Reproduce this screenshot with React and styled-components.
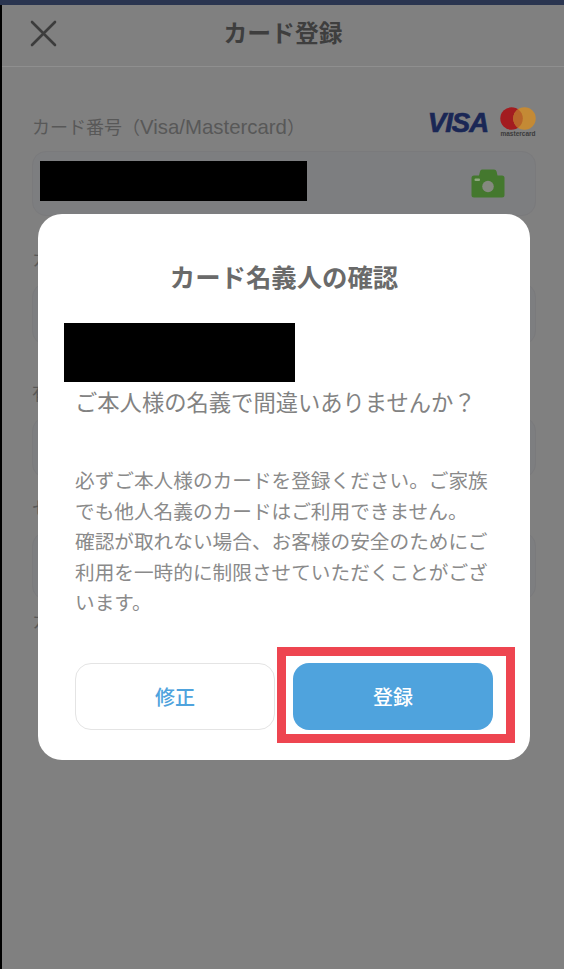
import React from "react";
import styled, { createGlobalStyle } from "styled-components";

const Global = createGlobalStyle`
  html, body { margin: 0; padding: 0; background: #808080; }
  * { box-sizing: border-box; }
  body { font-family: "Noto Sans CJK JP", "Noto Sans", sans-serif; }
`;

const Page = styled.div`
  position: relative;
  width: 564px;
  height: 969px;
  overflow: hidden;
  display: flex;
  flex-direction: column;
  background: #808080;
`;

const StatusStrip = styled.div`
  height: 5px;
  flex: none;
  background: #2a3550;
`;

const Screen = styled.div`
  flex: 1;
  border-left: 2px solid #000;
  display: flex;
  flex-direction: column;
`;

const Header = styled.header`
  height: 62px;
  flex: none;
  display: flex;
  align-items: center;
  justify-content: center;
  position: relative;
  border-bottom: 1px solid #8f8f8f;
`;

const CloseButton = styled.div`
  position: absolute;
  left: 27px;
  top: 14px;
  width: 28px;
  height: 28px;
  color: #3c3c3c;
`;

const HeaderTitle = styled.h1`
  margin: 0 0 8px 0;
  font-size: 23.8px;
  font-weight: 700;
  line-height: 32px;
  color: #3e3e3e;
`;

const Form = styled.div`
  padding: 47px 28px 0 30px;
  display: flex;
  flex-direction: column;
`;

const Field = styled.div`
  height: ${(p) => p.$pitch}px;
  flex: none;
`;

const LabelRow = styled.div`
  height: 24px;
  margin-bottom: 13px;
  display: flex;
  align-items: center;
  justify-content: space-between;
`;

const Label = styled.label`
  font-size: 18px;
  line-height: 24px;
  color: #585858;
`;

const LatinPart = styled.span`
  font-family: "Liberation Sans", sans-serif;
  font-size: 20.4px;
`;

const Brands = styled.div`
  display: flex;
  align-items: flex-start;
  gap: 12px;
  margin-top: -9px;
`;

const Visa = styled.span`
  font-family: "Liberation Sans", sans-serif;
  font-style: italic;
  font-weight: 700;
  font-size: 27.5px;
  line-height: 30px;
  letter-spacing: -1px;
  margin-top: 2px;
  color: #1a2755;
  -webkit-text-stroke: 0.7px #1a2755;
`;

const MasterMark = styled.div`
  display: flex;
  flex-direction: column;
  align-items: center;
  width: 36px;
  margin-top: 1px;
`;

const MasterWord = styled.span`
  font-family: "Liberation Sans", sans-serif;
  font-size: 6.5px;
  font-weight: 700;
  line-height: 7px;
  color: #3a3a3a;
`;

const Input = styled.div`
  height: ${(p) => p.$h}px;
  border-radius: 14px;
  background: #7d7e80;
  border: 1px solid #7a7a7c;
  display: flex;
  align-items: center;
  justify-content: space-between;
  padding: 0 30px 0 7px;
`;

const Redaction = styled.div`
  background: #000;
  flex: none;
  width: ${(p) => p.$w}px;
  height: ${(p) => p.$h}px;
`;

const CardBar = styled(Redaction)`
  margin-top: -6px;
`;

const Dialog = styled.div`
  position: absolute;
  left: 38px;
  top: 214px;
  width: 492px;
  height: 546px;
  background: #fff;
  border-radius: 24px;
  padding: 44px 37px 30px;
  display: flex;
  flex-direction: column;
`;

const DialogTitle = styled.h2`
  margin: 0 0 29px;
  text-align: center;
  font-size: 25.4px;
  line-height: 36px;
  font-weight: 700;
  color: #6a6a6a;
`;

const NameBar = styled(Redaction)`
  margin-left: -11px;
`;

const Question = styled.p`
  margin: 3px 0 48px 0;
  font-size: 22.3px;
  line-height: 32px;
  color: #828282;
  white-space: nowrap;
`;

const Notice = styled.p`
  margin: 0 0 45px;
  font-size: 19.67px;
  line-height: 30.5px;
  color: #8a8a8a;
`;

const Buttons = styled.div`
  display: flex;
  gap: 18px;
`;

const Button = styled.div`
  width: 201px;
  height: 67px;
  border-radius: 16px;
  display: flex;
  align-items: center;
  justify-content: center;
  font-size: 20px;
  font-weight: 500;
  color: ${(p) => (p.$primary ? "#fff" : "#4fa3dd")};
  background: ${(p) => (p.$primary ? "#4fa3dd" : "#fff")};
  border: ${(p) => (p.$primary ? "none" : "1.5px solid #e4e4e4")};
`;

const Highlight = styled.div`
  position: absolute;
  left: 239px;
  top: 433px;
  width: 238px;
  height: 96px;
  border: 9px solid #ee4550;
  pointer-events: none;
`;

const CloseIcon = () => (
  <svg width="28" height="28" viewBox="0 0 28 28" fill="none" stroke="currentColor" strokeWidth="2.6" strokeLinecap="round">
    <path d="M3 3 L26 26 M26 3 L3 26" />
  </svg>
);

const CameraIcon = () => (
  <svg width="34" height="29" viewBox="0 0 34 29">
    <path fill="#44782e" d="M11 0.5 H23 Q25 0.5 25.6 2.5 L26.5 6.5 H31 Q33.5 6.5 33.5 9 V26 Q33.5 28.5 31 28.5 H3 Q0.5 28.5 0.5 26 V9 Q0.5 6.5 3 6.5 H8 L9 2.5 Q9.6 0.5 11 0.5 Z" />
    <circle cx="17" cy="17.5" r="5.8" fill="#85897f" />
    <rect x="3.5" y="9.5" width="5.5" height="2.5" rx="1" fill="#8ea87e" />
  </svg>
);

const MasterCircles = () => (
  <svg width="36" height="23" viewBox="0 0 36 23">
    <circle cx="11.5" cy="11.5" r="11.2" fill="#a31c20" />
    <circle cx="24.5" cy="11.5" r="11.2" fill="#c48a35" />
    <path fill="#b8642a" d="M18 2.3 A11.2 11.2 0 0 1 18 20.7 A11.2 11.2 0 0 1 18 2.3 Z" />
  </svg>
);

export default function App() {
  return (
    <Page>
      <Global />
      <StatusStrip />
      <Screen>
        <Header>
          <CloseButton>
            <CloseIcon />
          </CloseButton>
          <HeaderTitle>カード登録</HeaderTitle>
        </Header>
        <Form>
          <Field $pitch={132}>
            <LabelRow>
              <Label>
                カード番号（<LatinPart>Visa/Mastercard</LatinPart>）
              </Label>
              <Brands>
                <Visa>VISA</Visa>
                <MasterMark>
                  <MasterCircles />
                  <MasterWord>mastercard</MasterWord>
                </MasterMark>
              </Brands>
            </LabelRow>
            <Input $h={65}>
              <CardBar $w={267} $h={40} />
              <CameraIcon />
            </Input>
          </Field>
          <Field $pitch={134}>
            <LabelRow>
              <Label>カード名義人</Label>
            </LabelRow>
            <Input $h={62} />
          </Field>
          <Field $pitch={115}>
            <LabelRow>
              <Label>有効期限</Label>
            </LabelRow>
            <Input $h={61} />
          </Field>
          <Field $pitch={113}>
            <LabelRow>
              <Label>セキュリティコード</Label>
            </LabelRow>
            <Input $h={68} />
          </Field>
          <Field $pitch={60}>
            <LabelRow>
              <Label>カード</Label>
            </LabelRow>
          </Field>
        </Form>
      </Screen>
      <Dialog>
        <DialogTitle>カード名義人の確認</DialogTitle>
        <NameBar $w={231} $h={59} />
        <Question>ご本人様の名義で間違いありませんか？</Question>
        <Notice>
          必ずご本人様のカードを登録ください。ご家族でも他人名義のカードはご利用できません。
          <br />
          確認が取れない場合、お客様の安全のためにご利用を一時的に制限させていただくことがございます。
        </Notice>
        <Buttons>
          <Button>修正</Button>
          <Button $primary>登録</Button>
        </Buttons>
        <Highlight />
      </Dialog>
    </Page>
  );
}
